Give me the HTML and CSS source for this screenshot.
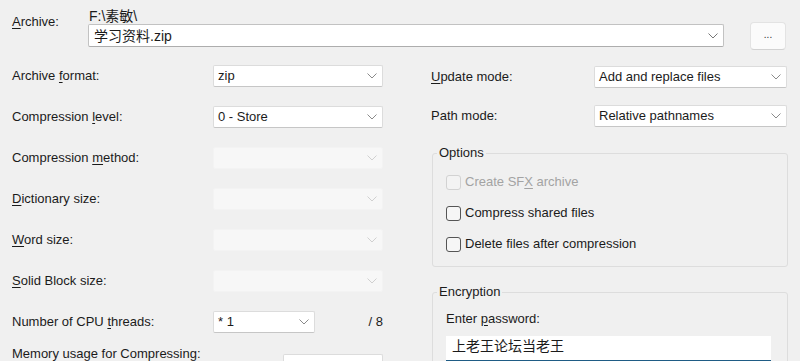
FILE: index.html
```html
<!DOCTYPE html>
<html lang="en">
<head>
  <meta charset="UTF-8">
  <title>Add to Archive</title>
  <link rel="stylesheet" href="styles.css">
</head>
<body>
  <div class="dialog">
    <div class="archive-row">
      <div class="archive-label"><u>A</u>rchive:</div>
      <div class="archive-field">
        <div class="path cjk">F:\素敏\</div>
        <div class="combo archive-combo">
          <span class="combo-text cjk">学习资料.zip</span>
          <svg class="chevron" width="10" height="6" viewBox="0 0 10 6"><path d="M0.5 0.5 L5 5 L9.5 0.5" fill="none" stroke="#777"/></svg>
        </div>
      </div>
      <button class="browse-btn">...</button>
    </div>

    <div class="settings">
      <div class="col-left">
        <div class="row">
          <span class="row-label">Archive <u>f</u>ormat:</span>
          <div class="combo">
            <span class="combo-text">zip</span>
            <svg class="chevron" width="10" height="6" viewBox="0 0 10 6"><path d="M0.5 0.5 L5 5 L9.5 0.5" fill="none" stroke="#8a8a8a"/></svg>
          </div>
        </div>
        <div class="row">
          <span class="row-label">Compression <u>l</u>evel:</span>
          <div class="combo">
            <span class="combo-text">0 - Store</span>
            <svg class="chevron" width="10" height="6" viewBox="0 0 10 6"><path d="M0.5 0.5 L5 5 L9.5 0.5" fill="none" stroke="#8a8a8a"/></svg>
          </div>
        </div>
        <div class="row">
          <span class="row-label">Compression <u>m</u>ethod:</span>
          <div class="combo disabled">
            <svg class="chevron" width="10" height="6" viewBox="0 0 10 6"><path d="M0.5 0.5 L5 5 L9.5 0.5" fill="none" stroke="#d0d0d0"/></svg>
          </div>
        </div>
        <div class="row">
          <span class="row-label"><u>D</u>ictionary size:</span>
          <div class="combo disabled">
            <svg class="chevron" width="10" height="6" viewBox="0 0 10 6"><path d="M0.5 0.5 L5 5 L9.5 0.5" fill="none" stroke="#d0d0d0"/></svg>
          </div>
        </div>
        <div class="row">
          <span class="row-label"><u>W</u>ord size:</span>
          <div class="combo disabled">
            <svg class="chevron" width="10" height="6" viewBox="0 0 10 6"><path d="M0.5 0.5 L5 5 L9.5 0.5" fill="none" stroke="#d0d0d0"/></svg>
          </div>
        </div>
        <div class="row">
          <span class="row-label"><u>S</u>olid Block size:</span>
          <div class="combo disabled">
            <svg class="chevron" width="10" height="6" viewBox="0 0 10 6"><path d="M0.5 0.5 L5 5 L9.5 0.5" fill="none" stroke="#d0d0d0"/></svg>
          </div>
        </div>
        <div class="row">
          <span class="row-label">Number of CPU <u>t</u>hreads:</span>
          <div class="combo threads-combo">
            <span class="combo-text">* 1</span>
            <svg class="chevron" width="10" height="6" viewBox="0 0 10 6"><path d="M0.5 0.5 L5 5 L9.5 0.5" fill="none" stroke="#8a8a8a"/></svg>
          </div>
          <span class="threads-max">/ 8</span>
        </div>
        <div class="memory-row">
          <span class="row-label">Memory usage for Compressing:</span>
          <div class="combo memory-combo"></div>
        </div>
      </div>

      <div class="col-right">
        <div class="row">
          <span class="row-label"><u>U</u>pdate mode:</span>
          <div class="combo">
            <span class="combo-text">Add and replace files</span>
            <svg class="chevron" width="10" height="6" viewBox="0 0 10 6"><path d="M0.5 0.5 L5 5 L9.5 0.5" fill="none" stroke="#8a8a8a"/></svg>
          </div>
        </div>
        <div class="row">
          <span class="row-label">Path mode:</span>
          <div class="combo">
            <span class="combo-text">Relative pathnames</span>
            <svg class="chevron" width="10" height="6" viewBox="0 0 10 6"><path d="M0.5 0.5 L5 5 L9.5 0.5" fill="none" stroke="#8a8a8a"/></svg>
          </div>
        </div>

        <fieldset class="group options-group">
          <legend>Options</legend>
          <div class="group-body">
            <div class="check disabled"><span class="check-box"></span><span>Create SF<u>X</u> archive</span></div>
            <div class="check"><span class="check-box"></span><span>Compress shared files</span></div>
            <div class="check"><span class="check-box"></span><span>Delete files after compression</span></div>
          </div>
        </fieldset>

        <fieldset class="group encryption-group">
          <legend>Encryption</legend>
          <div class="group-body">
            <div class="password-label">Enter <u>p</u>assword:</div>
            <div class="password-input cjk">上老王论坛当老王</div>
          </div>
        </fieldset>
      </div>
    </div>
  </div>
</body>
</html>
```

FILE: styles.css
```css
html, body {
  margin: 0;
  height: 100%;
  overflow: hidden;
}

body {
  background-color: #f0f0f0;
  font-family: 'Liberation Sans', 'Noto Sans CJK SC', sans-serif;
  font-size: 13px;
  line-height: 16px;
  color: #1b1b1b;
}

u {
  text-underline-offset: 2px;
}

.cjk {
  font-size: 14px;
}

/* archive name row */
.archive-row {
  display: flex;
  align-items: flex-start;
  padding-top: 8px;
}

.archive-label {
  width: 76px;
  padding-left: 12px;
  margin-top: 6px;
}

.archive-field {
  display: flex;
  flex-direction: column;
  width: 636px;
}

.path {
  height: 16px;
  line-height: 16px;
  padding-left: 1px;
}

.browse-btn {
  margin-left: 26px;
  margin-top: 14px;
  width: 36px;
  height: 28px;
  padding: 0 0 4px;
  background: #fbfbfb;
  border: 1px solid #e3e3e3;
  border-bottom-color: #d2d2d2;
  border-radius: 4px;
  font-family: 'Liberation Sans', sans-serif;
  font-size: 10px;
  color: #333;
}

/* combo boxes */
.combo {
  box-sizing: border-box;
  display: flex;
  align-items: center;
  justify-content: space-between;
  width: 170px;
  height: 22px;
  padding: 0 5px 0 4px;
  background: #ffffff;
  border: 1px solid #dcdcdc;
  border-bottom-color: #c6c6c6;
  border-radius: 2px;
}

.combo.disabled {
  justify-content: flex-end;
  background: #f7f7f7;
  border-color: #f3f3f3;
}

.archive-combo {
  width: 636px;
  height: 23px;
  padding-left: 5px;
  border-color: #c2c2c2;
  border-bottom-color: #adadad;
}

.chevron {
  flex-shrink: 0;
}

/* settings columns */
.settings {
  display: flex;
  align-items: flex-start;
}

.col-left {
  width: 371px;
  padding-left: 12px;
}

.col-right {
  width: 357px;
  margin-left: 48px;
}

.row {
  display: flex;
  align-items: center;
  height: 22px;
  margin-top: 19px;
}

.col-left .row:first-child {
  margin-top: 15px;
}

.row-label {
  width: 201px;
  flex-shrink: 0;
}

.threads-combo {
  width: 102px;
}

.threads-max {
  margin-left: auto;
}

.memory-row {
  display: flex;
  align-items: flex-start;
  margin-top: 13px;
}

.memory-row .row-label {
  width: 271px;
}

.memory-combo {
  width: 100px;
  height: 22px;
  margin-top: 8px;
}

.col-right .row {
  margin-top: 17px;
}

.col-right .row:first-child {
  margin-top: 16px;
}

.col-right .row-label {
  width: 163px;
}

.col-right .combo {
  width: 193px;
}

/* group boxes */
.group {
  box-sizing: border-box;
  width: 356px;
  margin: 18px 0 0 1px;
  padding: 0 0 12px 4px;
  min-inline-size: 0;
  border: 1px solid #dddddd;
  border-radius: 3px;
}

.group legend {
  padding: 0 2px;
  line-height: 16px;
}

.group-body {
  padding: 11px 0 0 9px;
}

.encryption-group {
  margin-top: 17px;
  padding-bottom: 40px;
}

.check {
  display: flex;
  align-items: center;
  height: 20px;
  margin-bottom: 11px;
}

.check:last-child {
  margin-bottom: 0;
}

.check-box {
  box-sizing: border-box;
  width: 15px;
  height: 15px;
  margin-right: 4px;
  background: #f6f6f6;
  border: 1px solid #555555;
  border-radius: 3px;
}

.check.disabled {
  color: #a3a3a3;
}

.check.disabled .check-box {
  border-color: #d2d2d2;
  background: #f3f3f3;
}

.password-label {
  height: 16px;
}

.password-input {
  box-sizing: border-box;
  width: 325px;
  height: 26px;
  margin-top: 9px;
  padding: 1px 6px 0;
  line-height: 18px;
  background: #ffffff;
  border-bottom: 2px solid #1f5c85;
}
```
